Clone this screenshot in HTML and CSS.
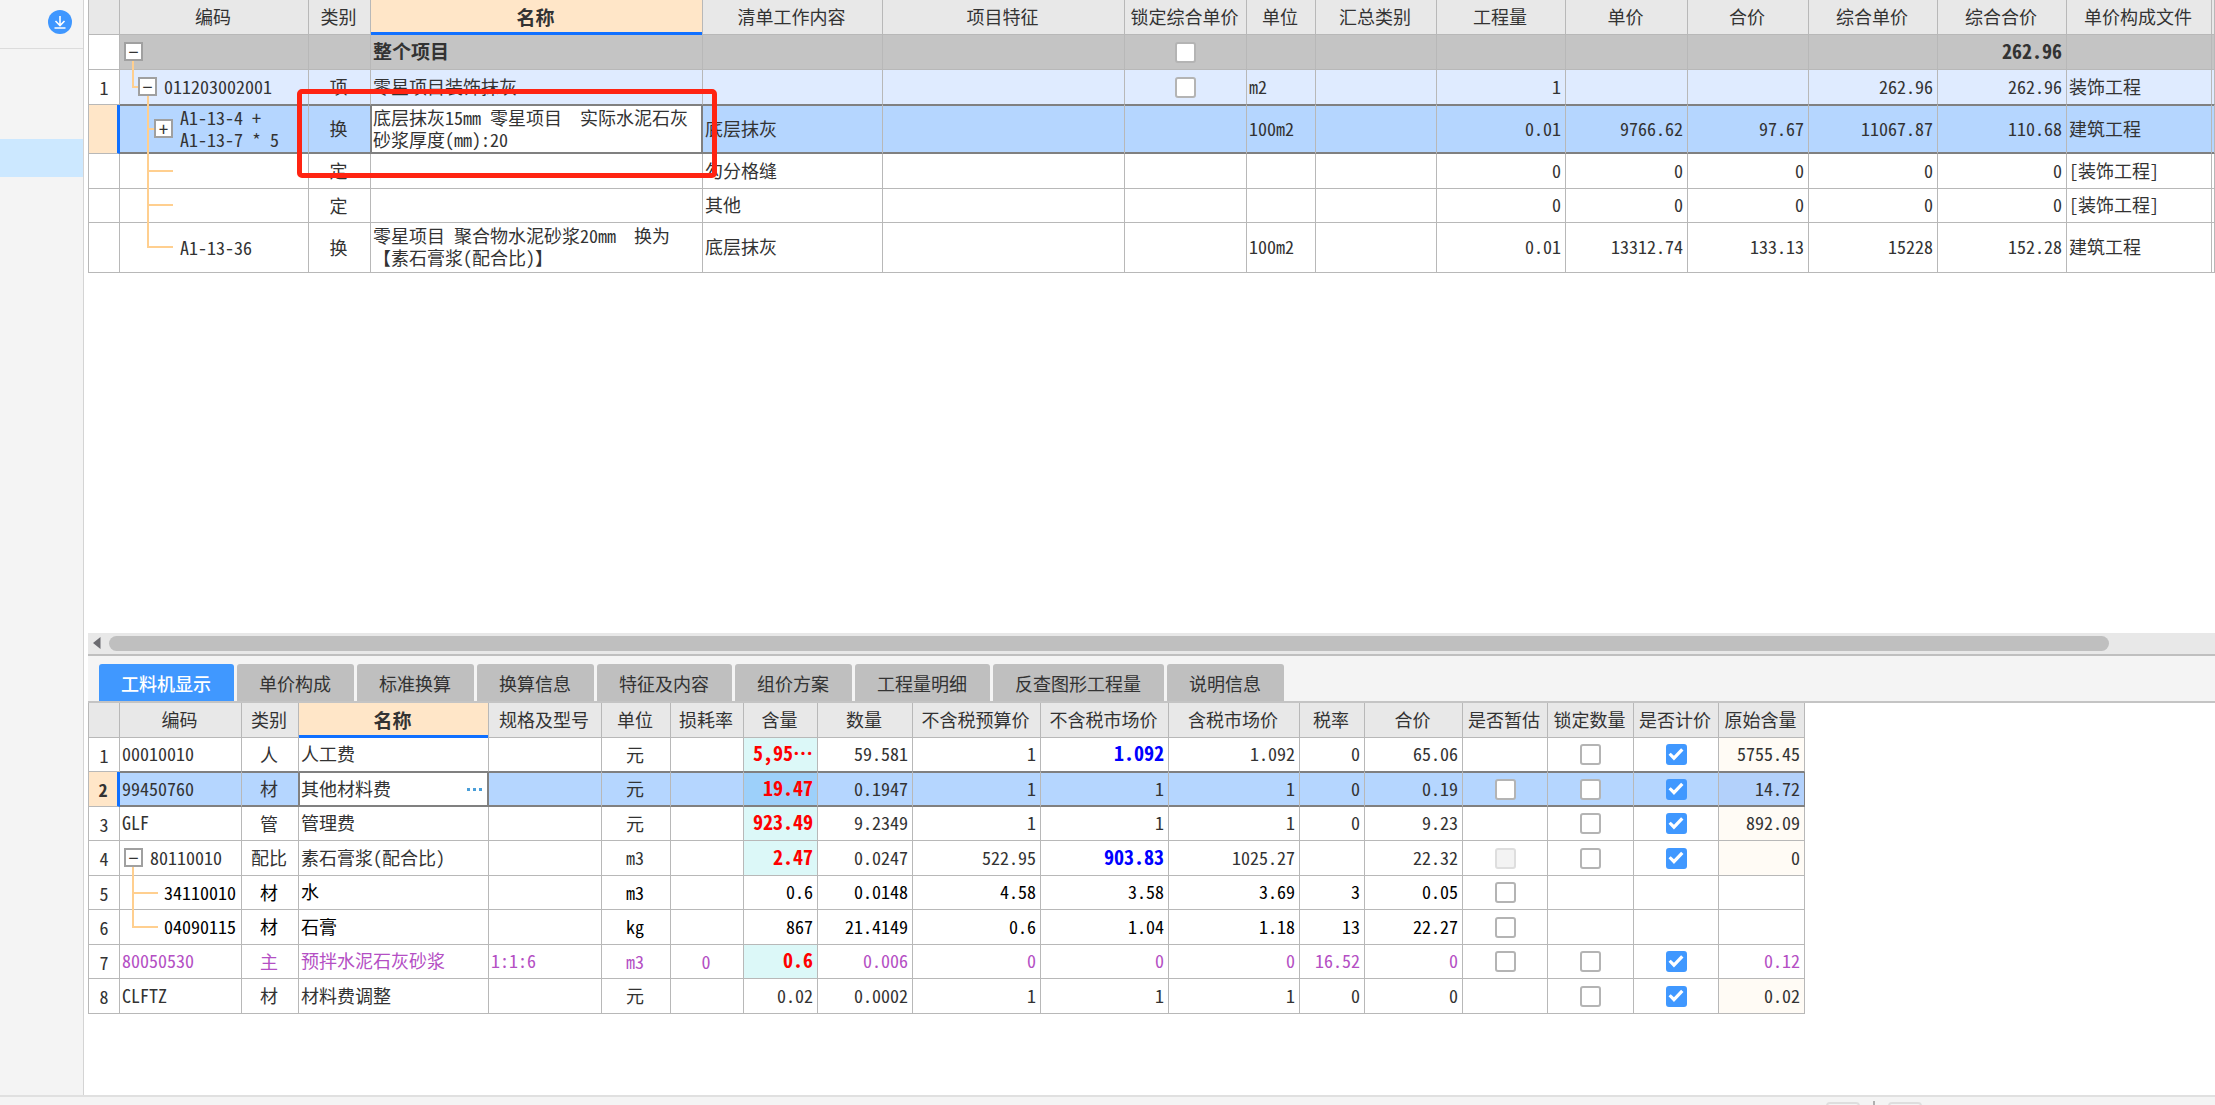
FILE: index.html
```html
<!DOCTYPE html>
<html lang="zh-CN">
<head>
<meta charset="utf-8">
<title>工程计价</title>
<link rel="stylesheet" href="styles.css">
</head>
<body>
<div class="workspace">
  <aside class="sidebar">
    <div class="sidebar-head">
      <button class="download" type="button" aria-label="下载">
        <svg width="24" height="24" viewBox="0 0 24 24"><circle cx="12" cy="12" r="12" fill="#3f97ff"/><path d="M12 6v9M7.500 11l4.500 4.500 4.500-4.500M6.500 18h11" fill="none" stroke="#fff" stroke-width="1.600"/></svg>
      </button>
    </div>
    <div class="sidebar-item"></div>
  </aside>
  <main class="main">
    <section class="list-pane">
      <table class="grid list">
        <colgroup><col class="w31"><col class="w189"><col class="w62"><col class="w332"><col class="w180"><col class="w242"><col class="w122"><col class="w69"><col class="w121"><col class="w129"><col class="w122"><col class="w121"><col class="w129"><col class="w129"><col class="w145"><col></colgroup>
        <thead>
          <tr><th></th><th>编码</th><th>类别</th><th class="sorted">名称</th><th>清单工作内容</th><th>项目特征</th><th>锁定综合单价</th><th>单位</th><th>汇总类别</th><th>工程量</th><th>单价</th><th>合价</th><th>综合单价</th><th>综合合价</th><th>单价构成文件</th><th></th></tr>
        </thead>
        <tbody>
          <tr class="project"><td class="idx"></td><td class="code"><svg class="guide" width="60" height="35"><path d="M13 26V35"/></svg><div class="node"><button class="toggle" type="button" aria-label="折叠">−</button></div></td><td></td><td class="strong">整个项目</td><td></td><td></td><td class="c"><input type="checkbox" aria-label="锁定综合单价"></td><td></td><td></td><td></td><td></td><td></td><td></td><td class="n big">262.96</td><td></td><td></td></tr>
          <tr class="bill"><td class="idx">1</td><td class="code"><svg class="guide" width="60" height="35"><path d="M13 0V17H18M28 26V35"/></svg><div class="node level1"><button class="toggle" type="button" aria-label="折叠">−</button>011203002001</div></td><td class="c">项</td><td>零星项目装饰抹灰</td><td></td><td></td><td class="c"><input type="checkbox" aria-label="锁定综合单价"></td><td>m2</td><td></td><td class="n">1</td><td></td><td></td><td class="n">262.96</td><td class="n">262.96</td><td>装饰工程</td><td></td></tr>
          <tr class="active tall"><td class="idx"></td><td class="code"><svg class="guide" width="60" height="49"><path d="M28 0V49M28 24H34"/></svg><div class="node level2"><button class="toggle" type="button" aria-label="展开">+</button><span>A1-13-4 +<br>A1-13-7 * 5</span></div></td><td class="c">换</td><td class="editing">底层抹灰15mm 零星项目　实际水泥石灰<br>砂浆厚度(mm):20</td><td>底层抹灰</td><td></td><td></td><td>100m2</td><td></td><td class="n">0.01</td><td class="n">9766.62</td><td class="n">97.67</td><td class="n">11067.87</td><td class="n">110.68</td><td>建筑工程</td><td></td></tr>
          <tr><td class="idx"></td><td class="code"><svg class="guide" width="60" height="35"><path d="M28 0V35M28 17H53"/></svg></td><td class="c">定</td><td></td><td>勾分格缝</td><td></td><td></td><td></td><td></td><td class="n">0</td><td class="n">0</td><td class="n">0</td><td class="n">0</td><td class="n">0</td><td>[装饰工程]</td><td></td></tr>
          <tr class="short"><td class="idx"></td><td class="code"><svg class="guide" width="60" height="35"><path d="M28 0V35M28 16H53"/></svg></td><td class="c">定</td><td></td><td>其他</td><td></td><td></td><td></td><td></td><td class="n">0</td><td class="n">0</td><td class="n">0</td><td class="n">0</td><td class="n">0</td><td>[装饰工程]</td><td></td></tr>
          <tr class="taller"><td class="idx"></td><td class="code"><svg class="guide" width="60" height="49"><path d="M28 0V24H53"/></svg><div class="node leaf2">A1-13-36</div></td><td class="c">换</td><td>零星项目 聚合物水泥砂浆20mm　换为<br>【素石膏浆(配合比)】</td><td>底层抹灰</td><td></td><td></td><td>100m2</td><td></td><td class="n">0.01</td><td class="n">13312.74</td><td class="n">133.13</td><td class="n">15228</td><td class="n">152.28</td><td>建筑工程</td><td></td></tr>
        </tbody>
      </table>
      <div class="callout"></div>
    </section>
    <div class="scrollbar"><svg width="8" height="14" viewBox="0 0 8 14"><path d="M7.500 1v12L0 7z" fill="#6b6b70"/></svg><div class="thumb"></div></div>
    <section class="detail-pane">
      <nav class="tabs">
        <button type="button" class="tab current">工料机显示</button><button type="button" class="tab">单价构成</button><button type="button" class="tab">标准换算</button><button type="button" class="tab">换算信息</button><button type="button" class="tab">特征及内容</button><button type="button" class="tab">组价方案</button><button type="button" class="tab">工程量明细</button><button type="button" class="tab">反查图形工程量</button><button type="button" class="tab">说明信息</button>
      </nav>
      <div class="detail-body">
      <table class="grid detail">
        <colgroup><col class="w31"><col class="w122"><col class="w57"><col class="w190"><col class="w113"><col class="w69"><col class="w73"><col class="w74"><col class="w95"><col class="w128"><col class="w128"><col class="w131"><col class="w65"><col class="w98"><col class="w85"><col class="w86"><col class="w85"><col class="w86"></colgroup>
        <thead>
          <tr><th></th><th>编码</th><th>类别</th><th class="sorted">名称</th><th>规格及型号</th><th>单位</th><th>损耗率</th><th>含量</th><th>数量</th><th>不含税预算价</th><th>不含税市场价</th><th>含税市场价</th><th>税率</th><th>合价</th><th>是否暂估</th><th>锁定数量</th><th>是否计价</th><th>原始含量</th></tr>
        </thead>
        <tbody>
          <tr><td class="idx">1</td><td>00010010</td><td class="c">人</td><td>人工费</td><td></td><td class="c">元</td><td></td><td class="n qty">5,95…</td><td class="n">59.581</td><td class="n">1</td><td class="n changed">1.092</td><td class="n">1.092</td><td class="n">0</td><td class="n">65.06</td><td></td><td class="c"><input type="checkbox" aria-label="锁定数量"></td><td class="c"><input type="checkbox" aria-label="是否计价" checked></td><td class="n orig">5755.45</td></tr>
          <tr class="active"><td class="idx">2</td><td>99450760</td><td class="c">材</td><td class="editing"><div class="picker">其他材料费<button type="button" class="more" aria-label="选择"><svg width="18" height="4" viewBox="0 0 18 4"><path d="M1 0h3v3H1zM7 0h3v3H7zM13 0h3v3h-3z" fill="#4a9ed8"/></svg></button></div></td><td></td><td class="c">元</td><td></td><td class="n qty">19.47</td><td class="n">0.1947</td><td class="n">1</td><td class="n">1</td><td class="n">1</td><td class="n">0</td><td class="n">0.19</td><td class="c"><input type="checkbox" aria-label="是否暂估"></td><td class="c"><input type="checkbox" aria-label="锁定数量"></td><td class="c"><input type="checkbox" aria-label="是否计价" checked></td><td class="n orig">14.72</td></tr>
          <tr><td class="idx">3</td><td>GLF</td><td class="c">管</td><td>管理费</td><td></td><td class="c">元</td><td></td><td class="n qty">923.49</td><td class="n">9.2349</td><td class="n">1</td><td class="n">1</td><td class="n">1</td><td class="n">0</td><td class="n">9.23</td><td></td><td class="c"><input type="checkbox" aria-label="锁定数量"></td><td class="c"><input type="checkbox" aria-label="是否计价" checked></td><td class="n orig">892.09</td></tr>
          <tr><td class="idx">4</td><td class="code"><svg class="guide" width="60" height="35"><path d="M13 26V35"/></svg><div class="node"><button class="toggle" type="button" aria-label="折叠">−</button>80110010</div></td><td class="c">配比</td><td>素石膏浆(配合比)</td><td></td><td class="c">m3</td><td></td><td class="n qty">2.47</td><td class="n">0.0247</td><td class="n">522.95</td><td class="n changed">903.83</td><td class="n">1025.27</td><td></td><td class="n">22.32</td><td class="c"><input type="checkbox" aria-label="是否暂估" disabled></td><td class="c"><input type="checkbox" aria-label="锁定数量"></td><td class="c"><input type="checkbox" aria-label="是否计价" checked></td><td class="n orig">0</td></tr>
          <tr class="sub"><td class="idx">5</td><td class="code"><svg class="guide" width="60" height="35"><path d="M13 0V35M13 17H38"/></svg><div class="node leaf1">34110010</div></td><td class="c">材</td><td>水</td><td></td><td class="c">m3</td><td></td><td class="n">0.6</td><td class="n">0.0148</td><td class="n">4.58</td><td class="n">3.58</td><td class="n">3.69</td><td class="n">3</td><td class="n">0.05</td><td class="c"><input type="checkbox" aria-label="是否暂估"></td><td></td><td></td><td></td></tr>
          <tr class="sub"><td class="idx">6</td><td class="code"><svg class="guide" width="60" height="35"><path d="M13 0V17H38"/></svg><div class="node leaf1">04090115</div></td><td class="c">材</td><td>石膏</td><td></td><td class="c">kg</td><td></td><td class="n">867</td><td class="n">21.4149</td><td class="n">0.6</td><td class="n">1.04</td><td class="n">1.18</td><td class="n">13</td><td class="n">22.27</td><td class="c"><input type="checkbox" aria-label="是否暂估"></td><td></td><td></td><td></td></tr>
          <tr class="main-material"><td class="idx">7</td><td>80050530</td><td class="c">主</td><td>预拌水泥石灰砂浆</td><td>1:1:6</td><td class="c">m3</td><td class="c">0</td><td class="n qty">0.6</td><td class="n">0.006</td><td class="n">0</td><td class="n">0</td><td class="n">0</td><td class="n">16.52</td><td class="n">0</td><td class="c"><input type="checkbox" aria-label="是否暂估"></td><td class="c"><input type="checkbox" aria-label="锁定数量"></td><td class="c"><input type="checkbox" aria-label="是否计价" checked></td><td class="n orig">0.12</td></tr>
          <tr><td class="idx">8</td><td>CLFTZ</td><td class="c">材</td><td>材料费调整</td><td></td><td class="c">元</td><td></td><td class="n">0.02</td><td class="n">0.0002</td><td class="n">1</td><td class="n">1</td><td class="n">1</td><td class="n">0</td><td class="n">0</td><td></td><td class="c"><input type="checkbox" aria-label="锁定数量"></td><td class="c"><input type="checkbox" aria-label="是否计价" checked></td><td class="n orig">0.02</td></tr>
        </tbody>
      </table>
      </div>
    </section>
  </main>
</div>
<footer class="status"><span class="chip"></span><span class="divider"></span><span class="chip"></span></footer>
</body>
</html>
```
FILE: styles.css
```css
* { box-sizing: border-box; }
body {
  margin: 0;
  height: 100vh;
  display: flex;
  flex-direction: column;
  overflow: hidden;
  background: #fff;
  color: #333;
  font: 18px/22px "Noto Sans Mono CJK SC", "Noto Sans CJK SC", monospace;
}
button { font: inherit; color: inherit; padding: 0; border: 0; background: none; }

.workspace { flex: 1; min-height: 0; display: flex; }
.sidebar { flex: none; width: 84px; background: #f4f4f4; border-right: 1px solid #d4d4d4; }
.sidebar-head { height: 49px; padding: 10px 11px; border-bottom: 1px solid #dcdcdc; display: flex; justify-content: flex-end; }
.download, .download svg { display: block; width: 24px; height: 24px; }
.sidebar-item { height: 38px; margin-top: 90px; background: #cce8ff; }

.main { flex: 1; min-width: 0; display: flex; flex-direction: column; padding-left: 4px; }
.list-pane { flex: 1; min-height: 0; position: relative; overflow: hidden; }

.grid { table-layout: fixed; border-collapse: separate; border-spacing: 0; border-left: 1px solid #b8b8b8; }
.list { width: 100%; }
.detail { width: 1717px; }
.w31 { width: 31px; } .w57 { width: 57px; } .w62 { width: 62px; } .w65 { width: 65px; }
.w69 { width: 69px; } .w73 { width: 73px; } .w74 { width: 74px; } .w85 { width: 85px; }
.w86 { width: 86px; } .w95 { width: 95px; } .w98 { width: 98px; } .w113 { width: 113px; }
.w121 { width: 121px; } .w122 { width: 122px; } .w128 { width: 128px; } .w129 { width: 129px; }
.w131 { width: 131px; } .w145 { width: 145px; } .w180 { width: 180px; } .w189 { width: 189px; }
.w190 { width: 190px; } .w242 { width: 242px; } .w332 { width: 332px; }

.grid th, .grid td {
  height: 35px;
  padding: 0 0 3px 2px;
  border-right: 1px solid #b8b8b8;
  border-bottom: 1px solid #b8b8b8;
  text-align: left;
  font-weight: 400;
  white-space: nowrap;
}
.grid th { padding: 0 2px 2px 0; text-align: center; background: #e8e8e8; }
.grid th.sorted { background: #ffe6c8; font-weight: 700; font-size: 19px; border-bottom: 0; box-shadow: inset 0 -3px #1070ff; }
.grid td.c { padding: 0 2px 2px 0; text-align: center; }
.grid td.c:has(input) { padding: 0; }
.grid td.n { padding-right: 4px; padding-left: 0; text-align: right; }
.grid td.idx { padding: 0; text-align: center; background: #fff; color: #333; }
.grid td.code { padding: 0 0 2px; position: relative; }
.grid .tall td { height: 49px; }
.grid .taller td { height: 50px; }
.grid .short td { height: 34px; }
.detail tbody tr:nth-child(odd) td { height: 34px; }

.project td { background: #c4c4c4; }
.grid .strong { font-weight: 700; font-size: 19px; }
.grid .big { font-weight: 700; font-size: 20px; }
.bill td { background: #dfebff; }
.sub td { color: #000; }
.main-material td { color: #b44fc4; }
.grid .qty { background: #dcf8f8; color: #f00; font-weight: 700; font-size: 20px; }
.grid .changed { color: #00f; font-weight: 700; font-size: 20px; }
.orig { background: #fffbf5; }
.main-material .orig { background: #fff; }

tr:has(+ .active) td:not(.idx) { border-bottom-color: #808080; }
.active td { background: #b5d6ff; border-bottom-color: #808080; box-shadow: inset 0 1px #808080, inset 0 -1px #808080; }
.grid .active .qty { background: #9dd0fa; }
.active .orig { background: #b3d1fb; border-right-color: #808080; }
.grid .active .idx { background: #ffe6c8; border-right: 3px solid #1070ff; border-bottom-color: #b8b8b8; box-shadow: none; font-weight: 700; }
.active .editing { background: #fff; border-right-color: #808080; box-shadow: -1px 0 #808080, inset 0 0 0 1px #808080; }

.guide { position: absolute; left: 0; top: 0; fill: none; stroke: #ffcf8f; stroke-width: 2; }
.node { position: relative; display: flex; align-items: center; gap: 7px; padding-left: 4px; }
.level1 { padding-left: 18px; }
.level2 { padding-left: 34px; }
.leaf1 { padding-left: 44px; }
.leaf2 { padding-left: 60px; }
.toggle { flex: none; width: 19px; height: 19px; border: 2px solid #a0a0a0; background: #fff; line-height: 15px; font-size: 18px; }
.picker { display: flex; align-items: center; justify-content: space-between; padding-right: 4px; }
.more { line-height: 0; }

input[type=checkbox] {
  appearance: none;
  display: block;
  width: 21px;
  height: 21px;
  margin: 0 auto;
  border: 2px solid #b4b4b4;
  border-radius: 3px;
  background: #fff;
}
input[type=checkbox]:disabled { border-color: #dedede; background: #f3f3f3; }
input[type=checkbox]:checked { border-color: #4098ff; background: #4098ff; }
input[type=checkbox]:checked::after {
  content: "";
  display: block;
  width: 17px;
  height: 17px;
  background: #fff;
  clip-path: polygon(6% 52%, 19% 39%, 38% 58%, 80% 13%, 94% 27%, 38% 86%);
}

.callout { position: absolute; left: 209px; top: 89px; width: 420px; height: 89px; border: 5px solid #ff2412; border-radius: 5px; }

.scrollbar { flex: none; height: 23px; padding: 3px 106px 3px 5px; display: flex; gap: 8px; background: #e8e8e8; border-bottom: 2px solid #bfbfbf; }
.scrollbar svg { flex: none; }
.thumb { flex: 1; height: 15px; border-radius: 8px; background: #bfbfbf; }

.detail-pane { flex: none; height: 439px; display: flex; flex-direction: column; }
.tabs { flex: none; height: 47px; padding: 8px 11px 0; display: flex; gap: 3px; background: #f4f4f4; border-bottom: 2px solid #c4c4c4; }
.tab { height: 37px; padding: 0 23px 0 22px; border-radius: 3px 3px 0 0; background: #bfbfbf; font-family: "Noto Sans CJK SC", sans-serif; }
.tab.current { background: #4098ff; color: #fff; font-weight: 500; }
.detail-body { flex: 1; min-height: 0; background: #fff; }

.status { flex: none; height: 10px; padding-left: 1826px; display: flex; gap: 13px; overflow: hidden; background: #f4f4f4; border-top: 2px solid #e0e0e0; }
.chip { flex: none; width: 34px; height: 20px; margin-top: 5px; border: 2px solid #dedede; border-radius: 4px; }
.divider { flex: none; width: 2px; height: 20px; margin-top: 4px; background: #b0b0b0; }
```
